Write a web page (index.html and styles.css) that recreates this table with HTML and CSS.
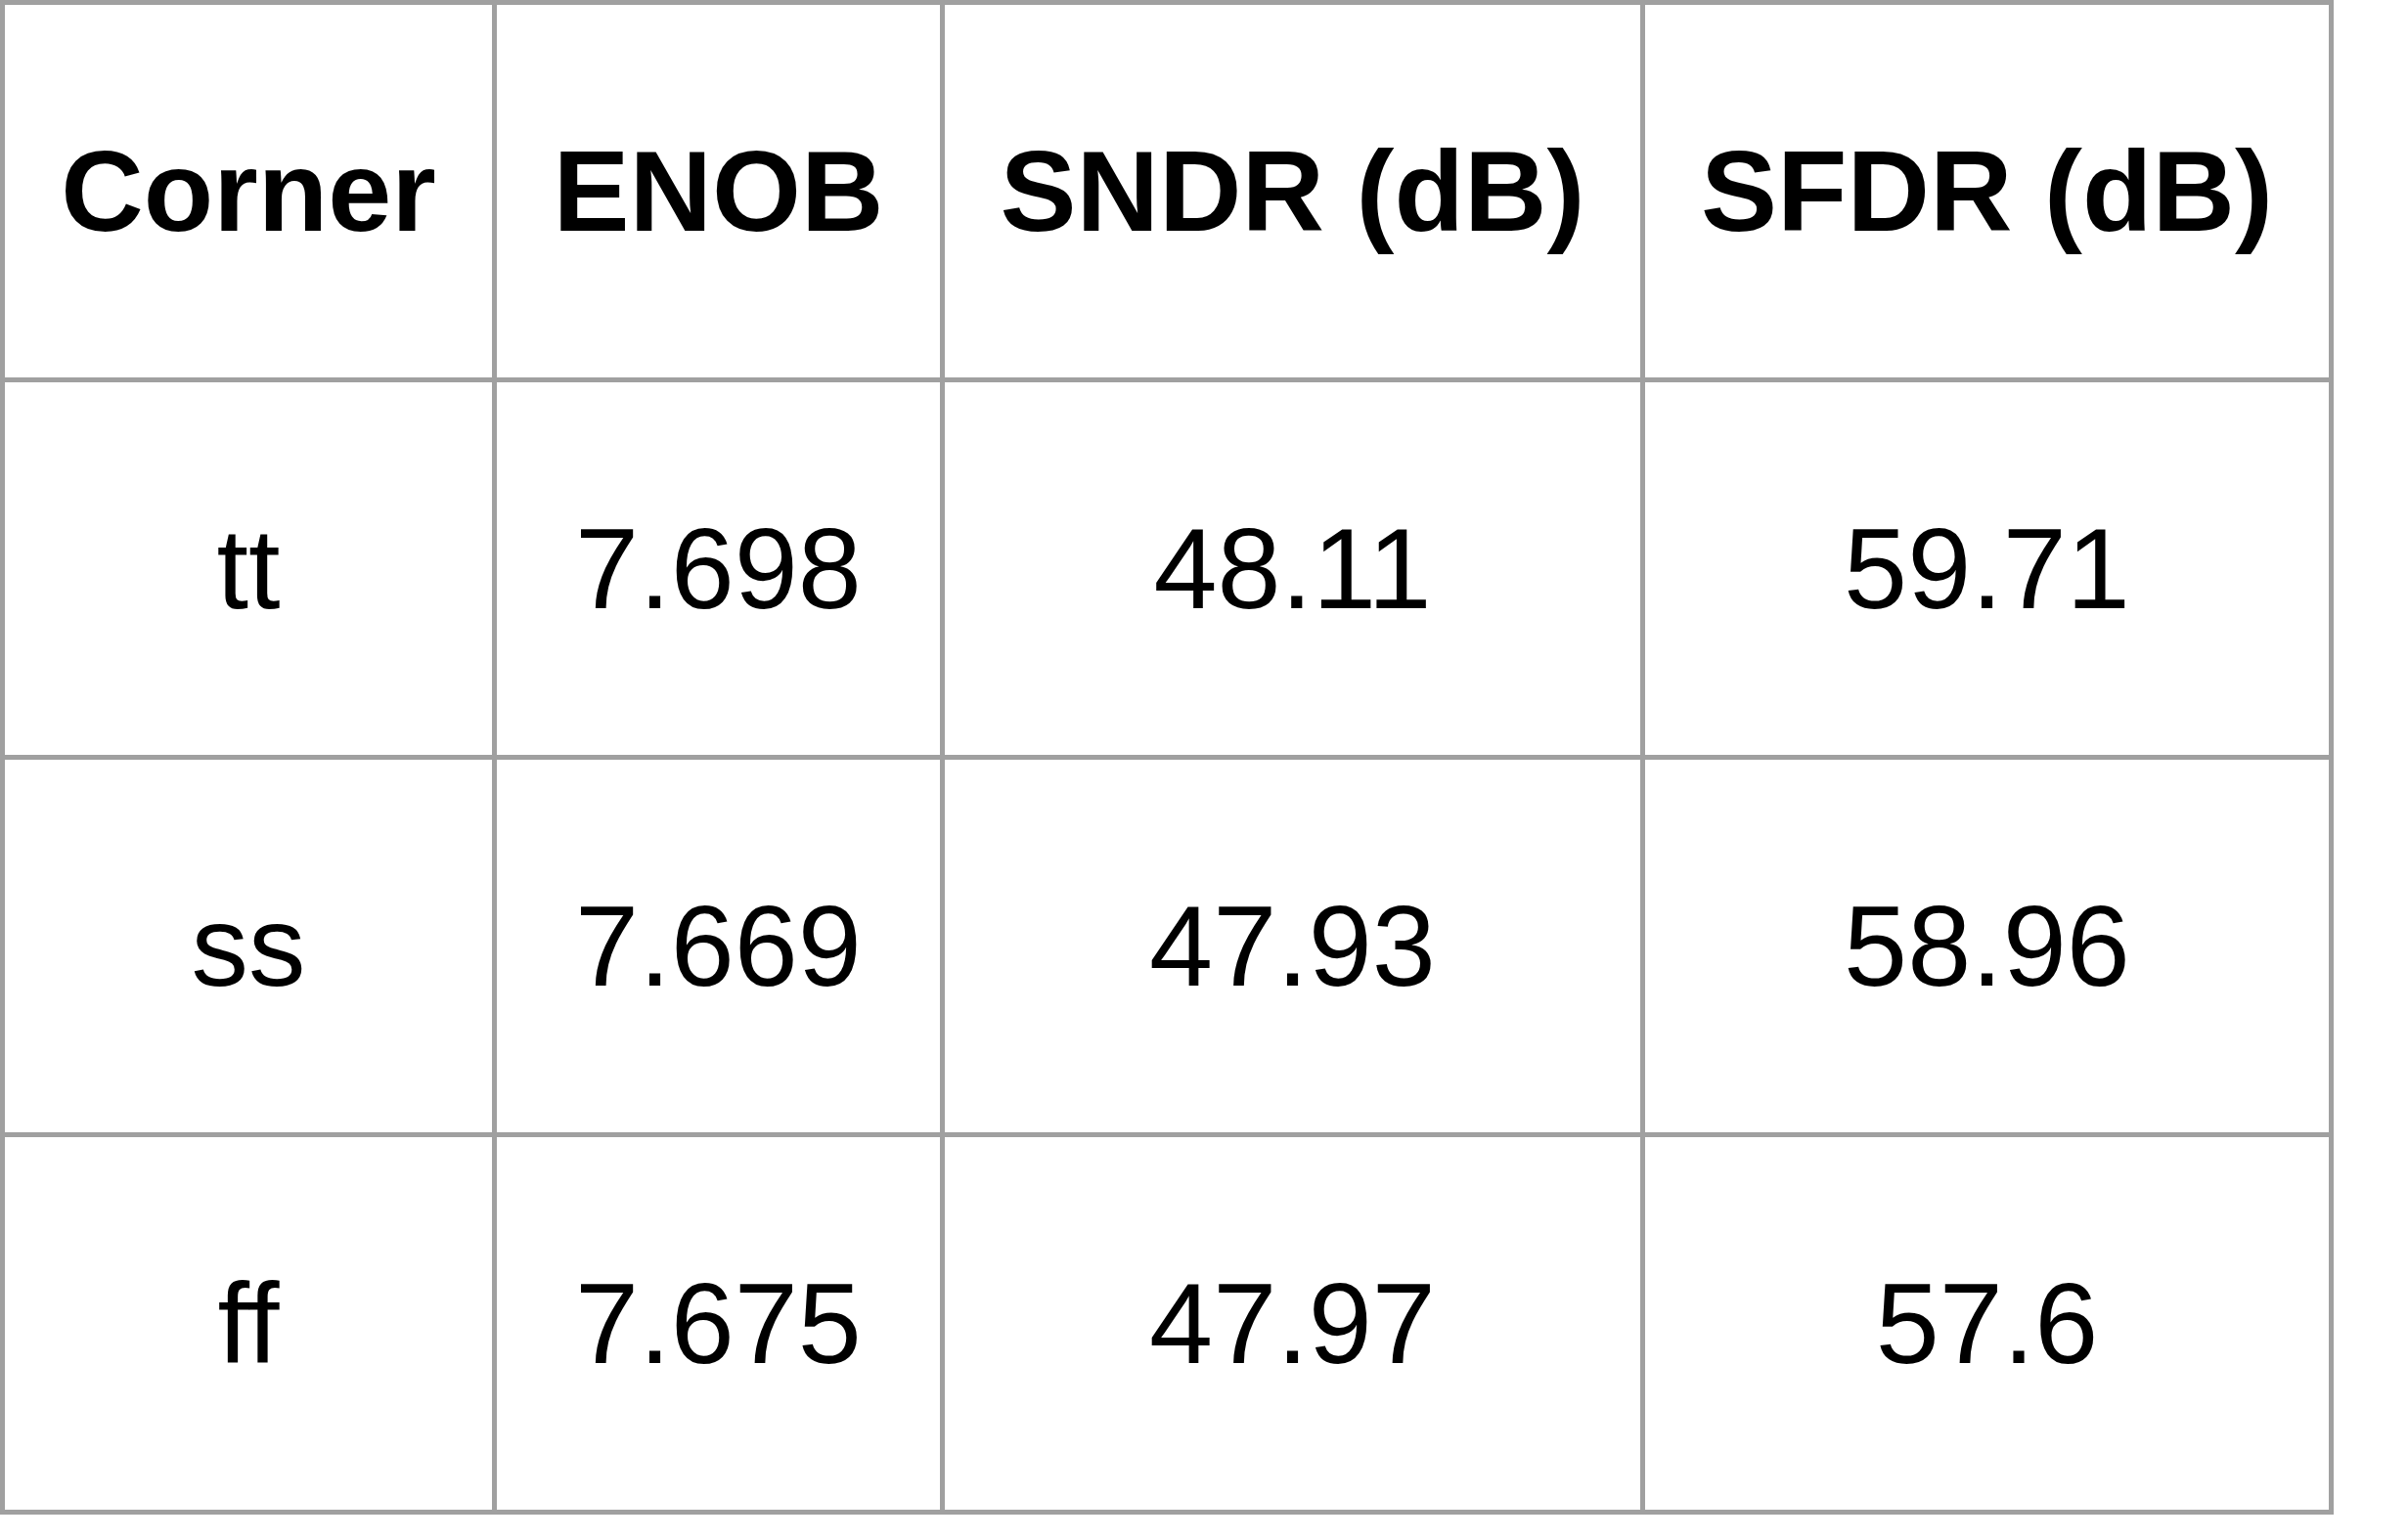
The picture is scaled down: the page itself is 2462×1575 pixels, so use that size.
FILE: index.html
```html
<!DOCTYPE html>
<html>
<head>
<meta charset="utf-8">
<link rel="stylesheet" href="styles.css">
</head>
<body>
<table class="results">
  <colgroup>
    <col class="c1"><col class="c2"><col class="c3"><col class="c4">
  </colgroup>
  <tr class="head">
    <th>Corner</th><th>ENOB</th><th>SNDR (dB)</th><th>SFDR (dB)</th>
  </tr>
  <tr>
    <td>tt</td><td>7.698</td><td>48.11</td><td>59.71</td>
  </tr>
  <tr>
    <td>ss</td><td>7.669</td><td>47.93</td><td>58.96</td>
  </tr>
  <tr>
    <td>ff</td><td>7.675</td><td>47.97</td><td>57.6</td>
  </tr>
</table>
</body>
</html>
```

FILE: styles.css
```css
html, body {
  margin: 0;
  padding: 0;
  background: #ffffff;
}
.results {
  border-collapse: separate;
  border-spacing: 0;
  border-left: 5px solid #a0a0a0;
  border-top: 5px solid #a0a0a0;
  table-layout: fixed;
  width: 2386px;
  font-family: "Liberation Sans", Arial, sans-serif;
  color: #000;
}
.c1 { width: 503px; }
.c2 { width: 458px; }
.c3 { width: 716px; }
.c4 { width: 704px; }
.results th,
.results td {
  border-right: 5px solid #a0a0a0;
  border-bottom: 5px solid #a0a0a0;
  padding: 0;
  height: 381px;
  box-sizing: content-box;
  text-align: center;
  vertical-align: middle;
  font-size: 117px;
  line-height: 1;
}
.results th {
  font-weight: bold;
}
.results td {
  font-weight: normal;
}
```
